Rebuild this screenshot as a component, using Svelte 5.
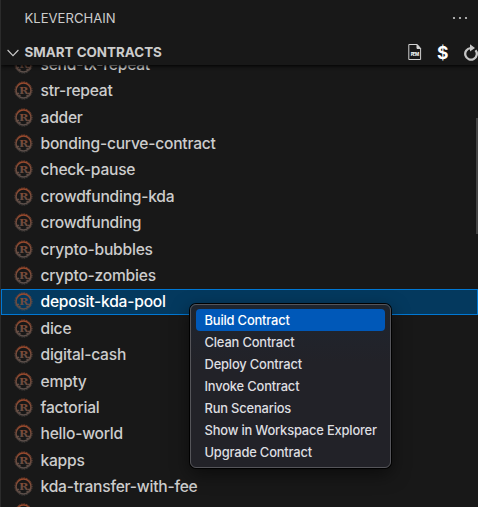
<script>
  const contracts = [
    'send-tx-repeat', 'str-repeat', 'adder', 'bonding-curve-contract', 'check-pause',
    'crowdfunding-kda', 'crowdfunding', 'crypto-bubbles', 'crypto-zombies',
    'deposit-kda-pool', 'dice', 'digital-cash', 'empty', 'factorial', 'hello-world',
    'kapps', 'kda-transfer-with-fee', ''
  ];
  const actions = [
    'Build Contract', 'Clean Contract', 'Deploy Contract', 'Invoke Contract',
    'Run Scenarios', 'Show in Workspace Explorer', 'Upgrade Contract'
  ];
  let selected = $state('deposit-kda-pool');
  let active = $state('Build Contract');
</script>

<div class="panel">
  <header class="title">
    <span>KLEVERCHAIN</span>
    <svg width="16" height="4" viewBox="0 0 16 4" fill="#ccc">
      <circle cx="2" cy="2" r="1.1" /><circle cx="8" cy="2" r="1.1" /><circle cx="14" cy="2" r="1.1" />
    </svg>
  </header>
  <div class="section">
    <svg class="chev" width="12" height="8" viewBox="0 0 12 8" fill="none" stroke="#ccc" stroke-width="1.1">
      <path d="M.6 1l5.400 5.600L11.400 1" />
    </svg>
    <b>SMART CONTRACTS</b>
    <div class="tools">
      <svg width="14" height="18" viewBox="0 0 14 18" fill="none" stroke="#d0d0d0" stroke-width="1">
        <path d="M.8 1.500H9l3.600 4v11H.8z" /><path d="M9 1.500v4h3.600z" fill="#d0d0d0" />
        <text x="6.900" y="13.300" text-anchor="middle" textLength="8.500" font-size="4.500" font-weight="800" fill="#eee" stroke="none">PEM</text>
      </svg>
      <span class="dollar">$</span>
      <svg width="16" height="17" viewBox="0 0 16 17" fill="none" stroke="#c4c4c4" stroke-width="2.300">
        <path d="M12.500 6.200A5.800 5.800 0 1 1 7.500 4.100" /><path d="M7 .3v7.200l5-3.600z" fill="#c4c4c4" stroke="none" />
      </svg>
    </div>
  </div>
  <div class="list">
    {#each contracts as name}
      <div class="row" class:selected={name === selected}>
        <svg class="rust" width="19" height="19" viewBox="0 0 19 19">
          <defs>
            <linearGradient id="rust" x1="0" y1="0" x2="0" y2="19" gradientUnits="userSpaceOnUse">
              <stop offset="0" stop-color="#a84a28" /><stop offset=".5" stop-color="#704c3e" /><stop offset="1" stop-color="#55504e" />
            </linearGradient>
          </defs>
          <g fill="none" stroke="url(#rust)">
            <circle cx="9.500" cy="9.500" r="7.500" stroke-width="1.600" />
            <circle cx="9.500" cy="9.500" r="8.600" stroke-width=".9" stroke-dasharray=".85 .86" />
            <path d="M2.500 12.500h2.500M14 12.500h2.500M5.500 15.200l.6-1.500M13.500 15.200l-.6-1.500" stroke-width="1.500" />
          </g>
          {#if name}
            <text x="9.700" y="12.800" text-anchor="middle" textLength="9.500" lengthAdjust="spacingAndGlyphs" font-size="9.500" font-weight="700" fill="url(#rust)">R</text>
          {/if}
        </svg>
        <span>{name}</span>
      </div>
    {/each}
    <div class="scroll"></div>
  </div>
  <div class="menu">
    {#each actions as action}
      <div class="item" class:active={action === active}>{action}</div>
    {/each}
  </div>
</div>

<style>
  :global(body) { background: #181818; }
  .panel {
    position: relative; box-sizing: border-box; width: 478px; height: 507px; overflow: hidden;
    display: flex; flex-direction: column; border-left: 1px solid #2b2b2b;
    background: #181818; color: #ccc; font-family: Inter, "Liberation Sans", sans-serif;
  }
  .title {
    box-sizing: border-box; display: flex; align-items: center; justify-content: space-between; flex: none;
    height: 37px; padding: 0 10px 2px 23.500px; font-size: 13.100px;
  }
  .section {
    position: relative; z-index: 1; display: flex; align-items: center; flex: none;
    box-sizing: border-box; height: 28px; padding: 2px 0 0 5.500px; font-size: 13.400px; background: #181818;
    box-shadow: 0 1px 4px #000; clip-path: inset(0 0 -6px 0);
  }
  .section b { margin-left: 6px; }
  .chev { margin-top: 2px; }
  .tools { display: flex; align-items: center; margin: 0 -1px 0 auto; }
  .dollar { width: 11px; margin: 0 15px 0 15px; font: 700 17.500px Inter, sans-serif; color: #fff; }
  .list { position: relative; flex: 1; min-height: 0; margin-top: -14px; overflow: hidden; }
  .row {
    box-sizing: border-box; display: flex; align-items: center; gap: 7.500px; height: 26.400px;
    padding: .3px 0 0 13px; font-size: 15.600px; font-weight: 450; letter-spacing: -.23px; white-space: nowrap;
  }
  .rust { flex: none; }
  .rust text { font-family: "DejaVu Serif", serif; letter-spacing: 0; }
  .selected { background: #04395e; color: #fff; box-shadow: inset 0 0 0 1px #0078d4; }
  .scroll { position: absolute; right: 0; top: 67px; width: 2px; height: 116px; background: #434343; }
  .menu {
    position: absolute; z-index: 2; left: 189px; top: 304px; width: 201px; height: 164px;
    box-sizing: border-box; padding: 4px 5px 4px 4.500px; border: 1px solid #55555a; border-radius: 6px;
    background: linear-gradient(#1e252f, #222228 35%); color: #dedee0;
    box-shadow: 0 0 0 1px #000, 0 6px 18px #0008;
  }
  .item {
    height: 22px; line-height: 23px; padding-left: 9px; border-radius: 4px;
    font-size: 12.900px; font-weight: 450; letter-spacing: -.17px; white-space: nowrap;
  }
  .active { background: #0058b8; color: #fff; }
</style>
